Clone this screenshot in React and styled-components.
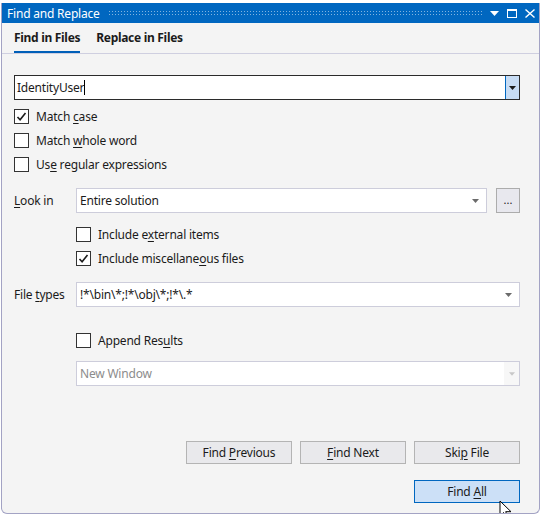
import styled, { createGlobalStyle } from 'styled-components';

const GlobalStyle = createGlobalStyle`
  html, body {
    margin: 0;
    padding: 0;
    background: #ffffff;
  }
  body {
    font-family: "Noto Sans", "Open Sans", sans-serif;
    font-size: 12px;
    color: #1b1b1b;
  }
  u {
    text-decoration-thickness: 1px;
    text-underline-offset: 2px;
  }
`;

const Window = styled.div`
  position: relative;
  box-sizing: border-box;
  width: 539px;
  height: 511px;
  margin: 3px 0 0 1px;
  border: 1px solid #a3a3c4;
  border-top: none;
  border-radius: 0 0 6px 6px;
  background: #f4f4f4;
  display: flex;
  flex-direction: column;
  overflow: hidden;
`;

const TitleBar = styled.div`
  height: 20px;
  background: #0067c0;
  display: flex;
  align-items: center;
  padding: 0 4px 0 5px;
  color: #fff;
`;

const Title = styled.div`
  font-size: 12px;
  letter-spacing: -0.2px;
  white-space: nowrap;
`;

const Grip = styled.div`
  flex: 1;
  height: 6px;
  margin: 0 6px 0 8px;
  background-image: radial-gradient(circle, rgba(255, 255, 255, 0.5) 0.6px, transparent 0.9px);
  background-size: 3px 3px;
`;

const TitleButtons = styled.div`
  display: flex;
  align-items: center;
  gap: 8px;
  svg {
    display: block;
  }
`;

const Tabs = styled.div`
  height: 30px;
  display: flex;
  gap: 16px;
  padding-left: 12px;
  border-bottom: 1px solid #cfcfe0;
`;

const Tab = styled.div`
  display: flex;
  align-items: center;
  font-weight: 700;
  font-size: 12px;
  letter-spacing: -0.3px;
  padding-top: 1px;
  box-sizing: border-box;
  border-bottom: 2px solid ${(p) => (p.$active ? '#005fb8' : 'transparent')};
`;

const Body = styled.div`
  flex: 1;
  display: flex;
  flex-direction: column;
  padding: 21px 19px 10px 12px;
`;

const SearchBox = styled.div`
  height: 25px;
  box-sizing: border-box;
  border: 1px solid #2b2b2b;
  background: #fff;
  display: flex;
`;

const SearchText = styled.div`
  flex: 1;
  display: flex;
  align-items: center;
  padding-left: 2px;
  letter-spacing: -0.2px;
`;

const Caret = styled.span`
  display: inline-block;
  width: 1px;
  height: 15px;
  background: #000;
`;

const DropButton = styled.div`
  width: 13px;
  border-left: 1px solid #0067c0;
  background: #c7dcf4;
  display: flex;
  align-items: center;
  justify-content: center;
`;

const CheckList = styled.div`
  display: flex;
  flex-direction: column;
  gap: 9px;
  margin-top: ${(p) => p.$top || 0}px;
  margin-left: ${(p) => p.$indent || 0}px;
`;

const CheckRow = styled.label`
  display: flex;
  align-items: center;
  gap: 7px;
  height: 15px;
  letter-spacing: -0.2px;
  white-space: nowrap;
`;

const Box = styled.span`
  width: 15px;
  height: 15px;
  box-sizing: border-box;
  border: 1px solid #333;
  background: #fff;
  display: flex;
  align-items: center;
  justify-content: center;
  flex: none;
`;

const FieldRow = styled.div`
  display: flex;
  align-items: center;
  margin-top: ${(p) => p.$top}px;
`;

const FieldLabel = styled.div`
  width: 62px;
  flex: none;
  letter-spacing: -0.2px;
`;

const Select = styled.div`
  flex: ${(p) => (p.$disabled ? 'none' : 1)};
  height: 25px;
  box-sizing: border-box;
  border: 1px solid #cdcddb;
  background: #fff;
  display: flex;
  align-items: center;
  padding-left: 3px;
  letter-spacing: -0.2px;
  color: ${(p) => (p.$disabled ? '#8c8c8c' : '#1b1b1b')};
  margin-left: ${(p) => p.$indent || 0}px;
  margin-top: ${(p) => p.$top || 0}px;
`;

const SelectValue = styled.span`
  flex: 1;
  white-space: pre;
`;

const ArrowCell = styled.span`
  width: 15px;
  align-self: stretch;
  display: flex;
  align-items: center;
  justify-content: center;
  background: ${(p) => (p.$disabled ? '#f7f7f7' : 'transparent')};
  margin-right: ${(p) => (p.$disabled ? 0 : 3)}px;
`;

const EllipsisButton = styled.div`
  width: 24px;
  height: 25px;
  box-sizing: border-box;
  margin-left: 9px;
  border: 1px solid #acacac;
  background: #e8e8ee;
  display: flex;
  align-items: center;
  justify-content: center;
  font-size: 11px;
  padding-bottom: 2px;
`;

const Spacer = styled.div`
  flex: 1;
`;

const ButtonRow = styled.div`
  display: flex;
  justify-content: flex-end;
  gap: 8px;
  margin-top: ${(p) => p.$top || 0}px;
`;

const Button = styled.div`
  width: 106px;
  height: 23px;
  box-sizing: border-box;
  border: 1px solid ${(p) => (p.$primary ? '#0067c0' : '#b4b4b4')};
  background: ${(p) => (p.$primary ? '#cce0f7' : '#e9e9ec')};
  display: flex;
  align-items: center;
  justify-content: center;
  letter-spacing: -0.2px;
  white-space: pre;
`;

const Cursor = styled.svg`
  position: absolute;
  left: 497px;
  top: 497px;
`;

const Arrow = ({ color = '#1b1b1b', w = 7 }) => (
  <svg width={w} height="4" viewBox="0 0 7 4">
    <path d="M0 0h7L3.5 4z" fill={color} />
  </svg>
);

const Check = () => (
  <svg width="11" height="11" viewBox="0 0 11 11">
    <path d="M1.5 6l2.6 2.8L9.5 2" fill="none" stroke="#1b1b1b" strokeWidth="1.6" />
  </svg>
);

const CheckItem = ({ checked, children }) => (
  <CheckRow>
    <Box>{checked && <Check />}</Box>
    <span>{children}</span>
  </CheckRow>
);

export default function App() {
  return (
    <>
      <GlobalStyle />
      <Window>
        <TitleBar>
          <Title>Find and Replace</Title>
          <Grip />
          <TitleButtons>
            <svg width="9" height="5" viewBox="0 0 9 5">
              <path d="M0 0h9L4.5 5z" fill="#fff" />
            </svg>
            <svg width="10" height="9" viewBox="0 0 10 9">
              <rect x="0.5" y="1" width="9" height="7.5" fill="none" stroke="#fff" />
              <rect x="0" y="0" width="10" height="2" fill="#fff" />
            </svg>
            <svg width="10" height="9" viewBox="0 0 10 9">
              <path d="M0.5 0.5l9 8M9.5 0.5l-9 8" stroke="#fff" strokeWidth="1.4" />
            </svg>
          </TitleButtons>
        </TitleBar>

        <Tabs>
          <Tab $active>Find in Files</Tab>
          <Tab>Replace in Files</Tab>
        </Tabs>

        <Body>
          <SearchBox>
            <SearchText>
              IdentityUser<Caret />
            </SearchText>
            <DropButton>
              <Arrow w={7} />
            </DropButton>
          </SearchBox>

          <CheckList $top={9}>
            <CheckItem checked>Match <u>c</u>ase</CheckItem>
            <CheckItem>Match <u>w</u>hole word</CheckItem>
            <CheckItem>Us<u>e</u> regular expressions</CheckItem>
          </CheckList>

          <FieldRow $top={16}>
            <FieldLabel><u>L</u>ook in</FieldLabel>
            <Select>
              <SelectValue>Entire solution</SelectValue>
              <ArrowCell><Arrow color="#6b6b6b" /></ArrowCell>
            </Select>
            <EllipsisButton>...</EllipsisButton>
          </FieldRow>

          <CheckList $top={14} $indent={62}>
            <CheckItem>Include e<u>x</u>ternal items</CheckItem>
            <CheckItem checked>Include miscellane<u>o</u>us files</CheckItem>
          </CheckList>

          <FieldRow $top={16}>
            <FieldLabel>File <u>t</u>ypes</FieldLabel>
            <Select>
              <SelectValue>!*\bin\*;!*\obj\*;!*\.*</SelectValue>
              <ArrowCell><Arrow color="#6b6b6b" /></ArrowCell>
            </Select>
          </FieldRow>

          <CheckList $top={26} $indent={62}>
            <CheckItem>Append Res<u>u</u>lts</CheckItem>
          </CheckList>

          <Select $disabled $indent={62} $top={13}>
            <SelectValue>New Window</SelectValue>
            <ArrowCell $disabled><Arrow color="#c8c8c8" w={6} /></ArrowCell>
          </Select>

          <Spacer />

          <ButtonRow>
            <Button><span>Find <u>P</u>revious</span></Button>
            <Button><span><u>F</u>ind Next</span></Button>
            <Button><span>Ski<u>p</u> File</span></Button>
          </ButtonRow>
          <ButtonRow $top={16}>
            <Button $primary><span>Find <u>A</u>ll</span></Button>
          </ButtonRow>
        </Body>

        <Cursor width="14" height="20" viewBox="0 0 14 20">
          <path d="M1 1v15l3.5-3.5 2.5 6 2.2-1-2.5-5.8H12z" fill="#fff" stroke="#000" strokeWidth="1" strokeLinejoin="round" />
        </Cursor>
      </Window>
    </>
  );
}
